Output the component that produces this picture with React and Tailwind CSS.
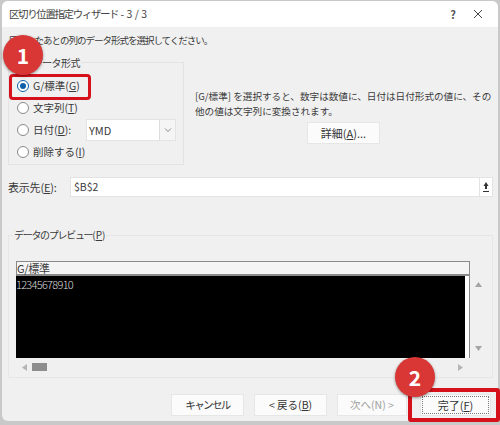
import React from 'react';

const font = { fontFamily: '"Noto Sans CJK JP", "Liberation Sans", sans-serif' };

const Radio = ({ checked, label }) => (
  <div className="flex items-center gap-[4px] h-[22px] text-[10.5px]">
    <span className={`flex items-center justify-center w-[12px] h-[12px] rounded-full border ${checked ? 'border-[#0f5fa8] bg-white' : 'border-[#8a8a8a] bg-white'}`}>
      {checked && <span className="w-[6px] h-[6px] rounded-full bg-[#0f5fa8]" />}
    </span>
    {label}
  </div>
);

const Btn = ({ children, disabled, className = '' }) => (
  <div className={`flex items-center justify-center h-[22px] bg-[#fbfbfb] border border-[#e6e6e6] ${disabled ? 'text-[#a0a0a0]' : 'text-[#333]'} ${className}`}>
    {children}
  </div>
);

const Badge = ({ n, className }) => (
  <div className={`absolute w-[40px] h-[40px] rounded-full bg-[#d93636] text-white flex items-center justify-center text-[21px] font-semibold shadow-[0_1px_3px_rgba(0,0,0,0.4)] ${className}`}>
    {n}
  </div>
);

export default function App() {
  return (
    <div className="relative w-[500px] h-[425px] overflow-hidden bg-[#c9c9c9] pt-[1px] pl-[2px] pr-[2px] text-[10px] leading-none text-[#3a3a3a]" style={font}>
      <div className="w-[496px] h-[420px] rounded-[6px] overflow-hidden bg-[#f0f0f0] flex flex-col">
        <div className="h-[26px] shrink-0 bg-white flex items-center pl-[7px] text-[#444] text-[10.5px]">
          <span className="flex-1 whitespace-nowrap"><span className="tracking-[-1.4px]">区切り位置指定ウィザード</span> - 3 / 3</span>
          <span className="w-[40px] text-center text-[11px] font-bold text-[#555]">?</span>
          <svg className="w-[10px] h-[10px] mr-[15px]" viewBox="0 0 10 10" fill="none" stroke="#444" strokeWidth="1">
            <path d="M1 1l8 8M9 1l-8 8" />
          </svg>
        </div>

        <div className="flex-1 flex flex-col pl-[6px] pr-[5px]">
          <div className="mt-[9px] h-[10px] pl-[1px] text-[9.5px] tracking-[-1px] whitespace-nowrap">区切ったあとの列のデータ形式を選択してください。</div>

          <div className="flex mt-[16px]">
            <div className="relative w-[176px] h-[103px] border border-[#e3e3e3] pl-[8px] pt-[12px]">
              <span className="absolute left-[4px] -top-[5px] bg-[#f0f0f0] px-[1px] tracking-[-0.6px]">列のデータ形式</span>
              <Radio checked label={<span>G/標準(<u>G</u>)</span>} />
              <Radio label={<span>文字列(<u>T</u>)</span>} />
              <div className="flex items-center">
                <Radio label={<span className="w-[53px]">日付(<u>D</u>):</span>} />
                <div className="w-[90px] h-[22px] bg-white border border-[#e3e3e3] flex items-center pl-[2px] text-[11px]">
                  <span className="flex-1">YMD</span>
                  <span className="w-[16px] h-full bg-[#f5f5f5] border-l border-[#ddd] flex items-center justify-center">
                    <svg className="w-[8px] h-[8px]" viewBox="0 0 8 8" fill="none" stroke="#888"><path d="M1 2.5l3 3 3-3" /></svg>
                  </span>
                </div>
              </div>
              <Radio label={<span>削除する(<u>I</u>)</span>} />
            </div>

            <div className="ml-[11px] flex-1 flex flex-col pt-[27px]">
              <div className="leading-[15px] text-[9.6px] whitespace-nowrap">
                <div>[G/標準] を選択すると、数字は数値に、日付は日付形式の値に、その</div>
                <div>他の値は文字列に変換されます。</div>
              </div>
              <Btn className="ml-[112px] mt-[3px] w-[73px] text-[11px]"><span>詳細(<u>A</u>)...</span></Btn>
            </div>
          </div>

          <div className="flex items-center mt-[12px] h-[20px]">
            <span className="w-[62px] text-[11px] tracking-[-0.2px] whitespace-nowrap">表示先(<u>E</u>):</span>
            <div className="w-[423px] h-[20px] bg-white border border-[#e3e3e3] flex items-center pl-[3px] text-[10.5px]">
              <span className="flex-1">$B$2</span>
              <span className="w-[13px] h-full border-l border-[#e3e3e3] flex items-center justify-center">
                <svg className="w-[8px] h-[12px]" viewBox="0 0 8 12" fill="#333"><path d="M4 1l2.5 4H5v3H3V5H1.5zM1 10h6v1H1z" /></svg>
              </span>
            </div>
          </div>

          <div className="relative mt-[38px] w-[485px] h-[143px] border border-[#e6e6e6] pl-[7px] pt-[25px]">
            <span className="absolute left-[4px] -top-[6px] bg-[#f0f0f0] px-[1px] whitespace-nowrap"><span className="tracking-[-1.3px]">データのプレビュー</span>(<u>P</u>)</span>
            <div className="w-[454px] h-[15px] border border-b-2 border-[#8a8a8a] bg-[#f4f4f4] text-[11px] tracking-[-0.3px] leading-[13px] whitespace-nowrap">G/標準</div>
            <div className="flex h-[100px]">
              <div className="w-[454px] flex flex-col">
                <div className="h-[82px] flex">
                  <div className="w-[449px] bg-black text-[#dcdcdc] text-[11px] tracking-[-0.7px] pt-[2px] leading-[12px] font-light">12345678910</div>
                  <div className="w-[5px] bg-white border-r border-[#8a8a8a]" />
                </div>
                <div className="h-[18px] flex items-center pl-[6px] pr-[7px]">
                  <svg className="w-[5px] h-[7px]" viewBox="0 0 5 7" fill="#b5b5b5"><path d="M5 0v7L0 3.5z" /></svg>
                  <span className="ml-[5px] w-[15px] h-[8px] bg-[#8d8d8d]" />
                  <svg className="ml-auto w-[5px] h-[7px]" viewBox="0 0 5 7" fill="#b5b5b5"><path d="M0 0v7l5-3.500z" /></svg>
                </div>
              </div>
              <div className="w-[16px] flex flex-col items-center justify-between pb-[25px] pt-[6px]">
                <svg className="w-[7px] h-[5px]" viewBox="0 0 7 5" fill="#a5a5a5"><path d="M0 5h7L3.500 0z" /></svg>
                <svg className="w-[7px] h-[5px]" viewBox="0 0 7 5" fill="#a5a5a5"><path d="M0 0h7L3.500 5z" /></svg>
              </div>
            </div>
          </div>

          <div className="flex mt-[16px] pl-[163px] text-[10.5px]">
            <Btn className="w-[73px] tracking-[-1.6px]">キャンセル</Btn>
            <Btn className="ml-[10px] w-[73px]"><span>&lt; 戻る(<u>B</u>)</span></Btn>
            <Btn disabled className="ml-[10px] w-[70px]">次へ(N) &gt;</Btn>
            <Btn className="ml-[13px] w-[71px] text-[11px] border-[#6f9fd0] outline-1 outline-dotted -outline-offset-3 outline-[#777]"><span>完了(<u>F</u>)</span></Btn>
          </div>
        </div>
      </div>

      <div className="absolute left-[9px] top-[74px] w-[82px] h-[26px] rounded-[4px] border-[3px] border-[#d5121b]" />
      <div className="absolute left-[408px] top-[388px] w-[92px] h-[34px] rounded-[3px] border-[4px] border-[#d5121b]" />
      <Badge n="1" className="left-[3px] top-[35px]" />
      <Badge n="2" className="left-[395px] top-[357px]" />
    </div>
  );
}
